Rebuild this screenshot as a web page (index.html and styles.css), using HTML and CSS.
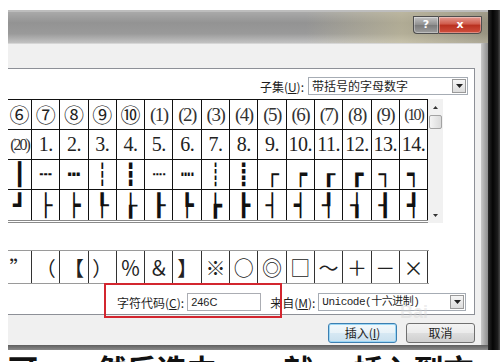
FILE: index.html
```html
<!DOCTYPE html>
<html>
<head>
    <title>符号</title>
    <link rel="stylesheet" href="styles.css">
</head>
<body>
<div class="screen">
    <div class="desk">
        <div class="window">
            <!-- Aero title bar, caption cropped off -->
            <div class="titlebar">
                <span class="cap-btn help">?</span>
                <span class="cap-btn close">x</span>
            </div>

            <div class="frame-row">
                <div class="client">
                    <div class="tab-band"></div>

                    <div class="panel">
                        <div class="subset-row">
                            <span class="label">子集(<u>U</u>):</span>
                            <div class="select subset-select">
                                <span class="select-text">带括号的字母数字</span>
                                <span class="drop-btn"><svg width="7" height="4" viewBox="0 0 7 4"><path d="M0 0h7L3.5 4z" fill="#222"/></svg></span>
                            </div>
                        </div>

                        <div class="grid-wrap">
                            <div class="symbol-grid">
                                <span class="cell">⑥</span><span class="cell">⑦</span><span class="cell">⑧</span><span class="cell">⑨</span><span class="cell">⑩</span><span class="cell paren">(1)</span><span class="cell paren">(2)</span><span class="cell paren">(3)</span><span class="cell paren">(4)</span><span class="cell paren">(5)</span><span class="cell paren">(6)</span><span class="cell paren">(7)</span><span class="cell paren">(8)</span><span class="cell paren">(9)</span><span class="cell paren tight">(10)</span>
                                <span class="cell paren tight">(20)</span><span class="cell num">1.</span><span class="cell num">2.</span><span class="cell num">3.</span><span class="cell num">4.</span><span class="cell num">5.</span><span class="cell num">6.</span><span class="cell num">7.</span><span class="cell num">8.</span><span class="cell num">9.</span><span class="cell num">10.</span><span class="cell num">11.</span><span class="cell num">12.</span><span class="cell num">13.</span><span class="cell num">14.</span>
                                <span class="cell box">┃</span><span class="cell box">┄</span><span class="cell box">┅</span><span class="cell box">┆</span><span class="cell box">┇</span><span class="cell box">┈</span><span class="cell box">┉</span><span class="cell box">┊</span><span class="cell box">┋</span><span class="cell box">┌</span><span class="cell box">┍</span><span class="cell box">┎</span><span class="cell box">┏</span><span class="cell box">┐</span><span class="cell box">┑</span>
                                <span class="cell box last">┛</span><span class="cell box last">├</span><span class="cell box last">┝</span><span class="cell box last">┞</span><span class="cell box last">┟</span><span class="cell box last">┠</span><span class="cell box last">┡</span><span class="cell box last">┢</span><span class="cell box last">┣</span><span class="cell box last">┤</span><span class="cell box last">┥</span><span class="cell box last">┦</span><span class="cell box last">┧</span><span class="cell box last">┨</span><span class="cell box last">┩</span>
                            </div>
                            <div class="vscroll">
                                <span class="arrow"><svg width="5" height="3" viewBox="0 0 5 3"><path d="M0 3h5L2.5 0z" fill="#333"/></svg></span>
                                <span class="thumb"></span>
                                <span class="track"></span>
                                <span class="arrow"><svg width="5" height="3" viewBox="0 0 5 3"><path d="M0 0h5L2.5 3z" fill="#333"/></svg></span>
                            </div>
                        </div>

                        <!-- recently used symbols -->
                        <div class="recent">
                            <span class="rcell">”</span><span class="rcell">（</span><span class="rcell">【</span><span class="rcell">）</span><span class="rcell">％</span><span class="rcell">＆</span><span class="rcell">】</span><span class="rcell">※</span><span class="rcell">○</span><span class="rcell">◎</span><span class="rcell">□</span><span class="rcell">～</span><span class="rcell">＋</span><span class="rcell">－</span><span class="rcell">×</span>
                        </div>

                        <div class="code-row">
                            <span class="label">字符代码(<u>C</u>):</span>
                            <span class="input">246C</span>
                            <span class="label from-label">来自(<u>M</u>):</span>
                            <div class="select from-select">
                                <span class="select-text mono">Unicode(十六进制)</span>
                                <span class="drop-btn"><svg width="7" height="4" viewBox="0 0 7 4"><path d="M0 0h7L3.5 4z" fill="#222"/></svg></span>
                            </div>
                        </div>
                    </div>

                    <div class="button-row">
                        <button class="btn default">插入(<u>I</u>)</button>
                        <button class="btn">取消</button>
                    </div>
                </div>
                <div class="glass-right"></div>
            </div>
            <div class="glass-bottom"></div>
        </div>
        <div class="behind"></div>
    </div>

    <div class="page-text"><span>可以</span><span>然后选中数字</span><span>就</span><span>插入到文档中</span></div>

    <!-- red annotation box drawn over the screenshot -->
    <div class="highlight"></div>
    <div class="watermark">Bai</div>
</div>
</body>
</html>
```

FILE: styles.css
```css
body {
    margin: 0;
    background: #fff;
    font-family: "Noto Sans CJK SC", "Liberation Sans", sans-serif;
}

.screen {
    width: 500px;
    height: 362px;
    padding-top: 10px;
    box-sizing: border-box;
    overflow: hidden;
    position: relative;
    background: #fff;
}

.desk {
    display: flex;
    height: 340px;
}

.window {
    width: 480px;
    margin-left: 8px;
    display: flex;
    flex-direction: column;
}

.behind {
    flex: 1;
    background: linear-gradient(to right, #2a2a2a, #050505 40%, #1c1c1c 80%, #4a4a4a);
}

/* title bar */

.titlebar {
    height: 33px;
    box-sizing: border-box;
    padding: 4px 6px 0 0;
    display: flex;
    justify-content: flex-end;
    align-items: flex-start;
    border-top: 2px solid #bdbdbd;
    background:
        linear-gradient(to right, rgba(0,0,0,0) 62%, rgba(205,195,150,0.5) 82%, rgba(150,140,100,0.45) 100%),
        linear-gradient(to bottom, #a9a9a9, #939393 35%, #9a9a9a 70%, #c2c2c2);
}

.cap-btn {
    height: 18px;
    box-sizing: border-box;
    border: 1px solid #4e4e4e;
    color: #fff;
    font-family: "DejaVu Sans", sans-serif;
    font-weight: bold;
    font-size: 11px;
    line-height: 15px;
    text-align: center;
    box-shadow: inset 0 0 0 1px rgba(255,255,255,0.35);
}

.help {
    width: 25px;
    border-right: none;
    border-radius: 0 0 0 4px;
    background: linear-gradient(to bottom, #c4c4c4, #8e8e8e 50%, #7a7a7a 50%, #9e9e9e);
}

.close {
    width: 44px;
    border-radius: 0 0 4px 0;
    background: linear-gradient(to bottom, #e39a90, #cf5a4a 45%, #b8301f 50%, #d0503e);
}

.frame-row {
    display: flex;
    height: 302px;
}

.client {
    width: 473px;
    background: #f0f0f0;
}

.glass-right {
    flex: 1;
    background: linear-gradient(to right, #c8c8c8, #8e8e8e);
}

.glass-bottom {
    height: 5px;
    background: linear-gradient(to bottom, #5e5e5e, #8a8a8a);
}

.tab-band {
    height: 25px;
    border-top: 1px solid #d6d6d6;
    box-sizing: border-box;
}

/* white tab page */

.panel {
    width: 467px;
    height: 247px;
    box-sizing: border-box;
    border: 1px solid #8d9097;
    border-left: none;
    background: #fff;
    font-size: 12px;
    color: #1e1e1e;
}

.label {
    white-space: nowrap;
}

.subset-row {
    margin-top: 8px;
    height: 18px;
    display: flex;
    justify-content: flex-end;
    align-items: center;
    gap: 4px;
    padding-right: 6px;
}

.select {
    height: 18px;
    box-sizing: border-box;
    border: 1px solid #a6acb4;
    background: #fff;
    display: flex;
    align-items: center;
    justify-content: space-between;
}

.select-text {
    padding-left: 3px;
    line-height: 16px;
}

.mono {
    font-family: "Liberation Mono", "Noto Sans CJK SC", monospace;
    font-size: 11px;
    letter-spacing: -0.5px;
}

.drop-btn {
    width: 14px;
    height: 14px;
    margin-right: 1px;
    box-sizing: border-box;
    border: 1px solid #9a9a9a;
    background: linear-gradient(to bottom, #f6f6f6, #dcdcdc);
    display: flex;
    align-items: center;
    justify-content: center;
}

.subset-select {
    width: 160px;
}

/* symbol table */

.grid-wrap {
    margin-top: 4px;
    display: flex;
}

.symbol-grid {
    display: grid;
    grid-template-columns: 24px repeat(14, 28.3px);
    grid-auto-rows: 30px;
    border-top: 1px solid #111;
    border-bottom: 3px double #8a8a8a;
    font-family: "Noto Sans CJK SC", serif;
    font-size: 20px;
    color: #222;
}

.cell {
    border-right: 1px solid #111;
    border-bottom: 1px solid #111;
    display: flex;
    align-items: center;
    justify-content: center;
    overflow: hidden;
    white-space: nowrap;
}

.cell.last {
    border-bottom: none;
}

.paren {
    font-family: "Liberation Serif", serif;
    font-size: 19px;
    letter-spacing: -1.5px;
    color: #333;
}

.paren.tight {
    font-size: 16px;
    letter-spacing: -2px;
}

.num {
    font-family: "Liberation Serif", serif;
    font-size: 20px;
    letter-spacing: -0.5px;
}

.box {
    font-family: "DejaVu Sans Mono", monospace;
    font-size: 22px;
    color: #111;
}

.vscroll {
    width: 15px;
    height: 124px;
    background: #f1f1f1;
    display: flex;
    flex-direction: column;
    align-items: center;
}

.arrow {
    height: 16px;
    display: flex;
    align-items: center;
}

.thumb {
    width: 13px;
    height: 14px;
    box-sizing: border-box;
    border: 1px solid #a3a3a3;
    border-radius: 2px;
    background: linear-gradient(to right, #f4f4f4, #dadada);
}

.track {
    flex: 1;
}

/* recently used */

.recent {
    margin-top: 27px;
    width: 421px;
    display: grid;
    grid-template-columns: 24px repeat(14, 28.3px);
    grid-auto-rows: 32px;
    border-top: 1px solid #9a9a9a;
    border-bottom: 1px solid #9a9a9a;
    font-family: "Noto Sans CJK SC", sans-serif;
    font-size: 20px;
    color: #222;
}

.rcell {
    border-right: 1px solid #333;
    display: flex;
    align-items: center;
    justify-content: center;
    overflow: hidden;
}

/* code row */

.code-row {
    margin-top: 9px;
    height: 18px;
    display: flex;
    align-items: center;
    gap: 3px;
    padding-left: 109px;
}

.input {
    width: 74px;
    height: 18px;
    box-sizing: border-box;
    border: 1px solid #abadb3;
    padding-left: 3px;
    font-family: "Liberation Sans", sans-serif;
    font-size: 11px;
    line-height: 16px;
}

.from-label {
    margin-left: 6px;
}

.from-select {
    width: 148px;
}

/* buttons */

.button-row {
    margin-top: 8px;
    display: flex;
    justify-content: flex-end;
    gap: 9px;
    padding-right: 6px;
}

.btn {
    width: 69px;
    height: 20px;
    padding: 0;
    border: 1px solid #707070;
    border-radius: 3px;
    background: linear-gradient(to bottom, #f3f3f3, #ebebeb 48%, #dddddd 52%, #cfcfcf);
    font-family: "Noto Sans CJK SC", sans-serif;
    font-size: 12px;
    color: #1e1e1e;
    line-height: 16px;
}

.btn.default {
    border-color: #3c7fb1;
    box-shadow: inset 0 0 0 1px #9ad6f5;
    background: linear-gradient(to bottom, #f2f8fb, #e8f2f8 48%, #d6e8f3 52%, #c9e0ee);
}

/* page behind the dialog */

.page-text {
    height: 12px;
    overflow: hidden;
    display: flex;
    gap: 40px;
    padding-left: 8px;
    font-size: 30px;
    font-weight: bold;
    line-height: 36px;
    color: #111;
}

.highlight {
    position: absolute;
    left: 104px;
    top: 283px;
    width: 178px;
    height: 35px;
    box-sizing: border-box;
    border: 2px solid #d3262f;
}

.watermark {
    position: absolute;
    left: 400px;
    top: 302px;
    font-family: "Liberation Sans", sans-serif;
    font-size: 18px;
    font-weight: bold;
    color: rgba(210, 210, 210, 0.4);
}
```
